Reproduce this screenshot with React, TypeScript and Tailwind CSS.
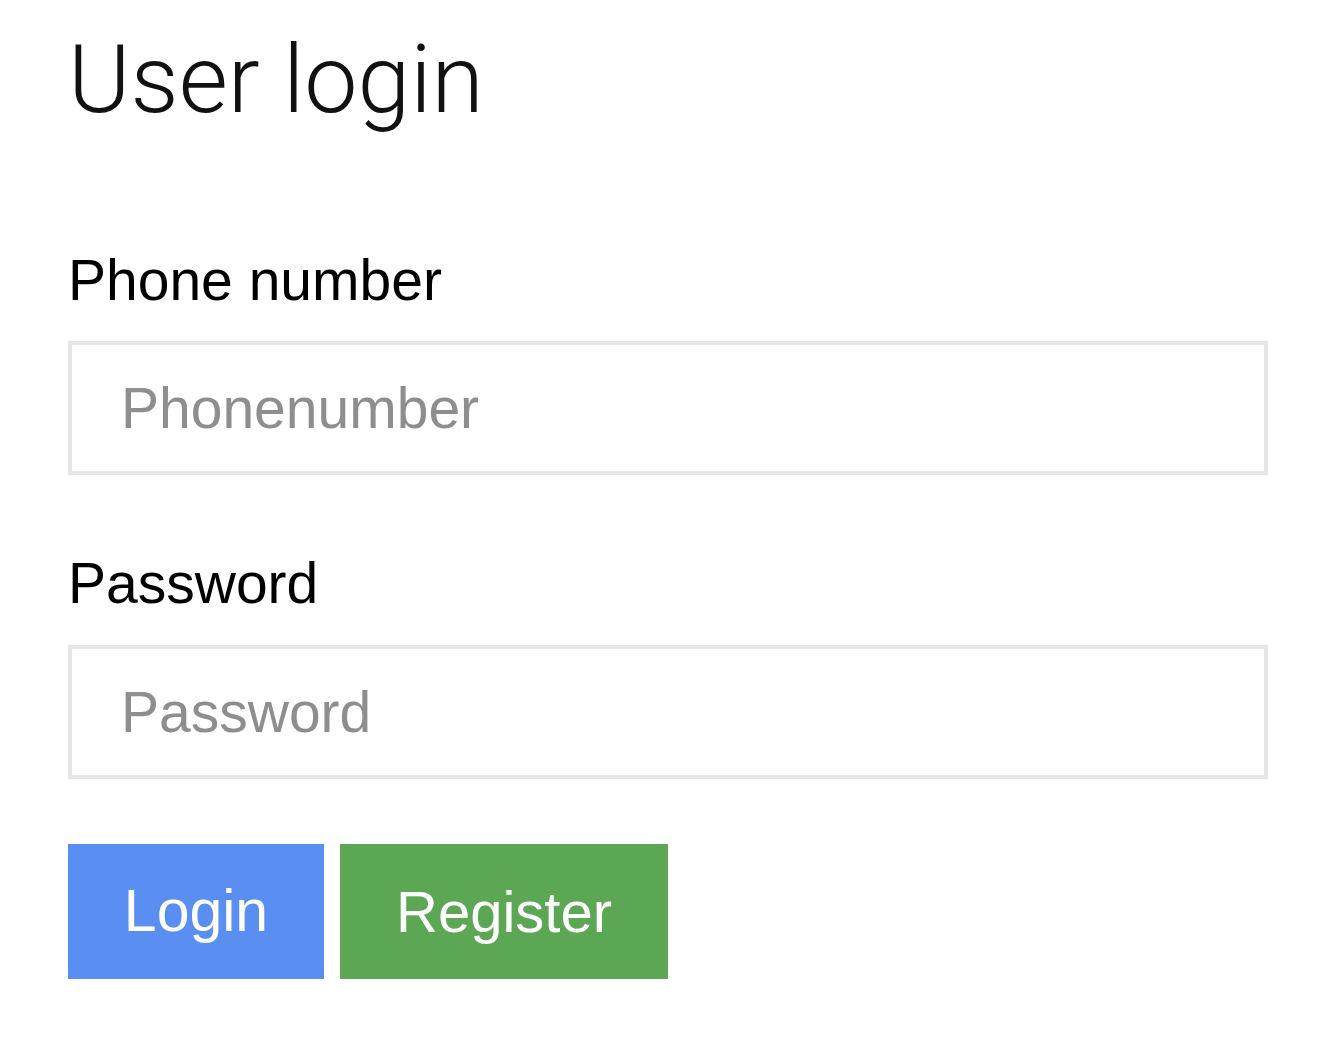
export default function App() {
  return (
    <div className="min-h-screen bg-white pl-[68px] pt-[26px] font-['Liberation_Sans',Arial,sans-serif]">
      <h1 className="text-[95px] leading-[108px] font-light font-['Roboto',sans-serif] text-[#111]">
        User login
      </h1>

      <form className="w-[1200px] mt-[111px]" onSubmit={(e) => e.preventDefault()}>
        {/* Phone number */}
        <label className="block text-[57px] leading-[70px] text-black">Phone number</label>
        <input
          type="text"
          placeholder="Phonenumber"
          className="mt-[26px] block w-full h-[134px] border-4 border-[#e6e6e6] pl-[49px] text-[57px] outline-none placeholder:text-[#8e8e8e]"
        />

        {/* Password */}
        <label className="block mt-[73px] text-[57px] leading-[70px] text-black">Password</label>
        <input
          type="password"
          placeholder="Password"
          className="mt-[27px] block w-full h-[134px] border-4 border-[#e6e6e6] pl-[49px] text-[57px] outline-none placeholder:text-[#8e8e8e]"
        />

        {/* Buttons */}
        <div className="flex gap-4 mt-[65px]">
          <button type="submit" className="h-[135px] w-[256px] bg-[#5a8ff1] text-white text-[59px]">
            Login
          </button>
          <button type="button" className="h-[135px] w-[328px] bg-[#5ca754] text-white text-[58px]">
            Register
          </button>
        </div>
      </form>
    </div>
  );
}
